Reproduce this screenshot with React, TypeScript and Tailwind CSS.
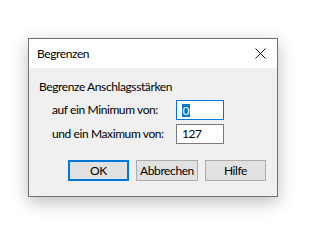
export default function App() {
  return (
    <div className="w-[326px] h-[251px] bg-white pt-[38px] pl-[28px] font-['Lato',sans-serif] text-[12px] tracking-[-0.4px] text-black">
      <div className="w-[250px] h-[159px] border border-[#707070] bg-[#f0f0f0] shadow-[0_5px_16px_rgba(0,0,0,0.26)] flex flex-col">
        {/* title bar */}
        <div className="h-[29px] bg-white flex items-center justify-between pl-[8px] pr-[9px]">
          <span className="leading-none">Begrenzen</span>
          <svg width="11" height="11" viewBox="0 0 11 11" className="mr-[2px]">
            <path d="M0.5 0.5 L10.5 10.5 M10.5 0.5 L0.5 10.5" stroke="#111" strokeWidth="1" />
          </svg>
        </div>

        <div className="flex-1 flex flex-col pl-[10px] pt-[11px]">
          <div className="leading-[16px]">Begrenze Anschlagsstärken</div>

          <div className="mt-[5px] flex flex-col gap-[4px] pl-[13px]">
            <div className="flex items-center h-[20px]">
              <span className="w-[124px] whitespace-nowrap">auf ein Minimum von:</span>
              <div className="w-[48px] h-[20px] border border-[#0078d7] bg-white flex items-center pl-[5px]">
                <span className="bg-[#0078d7] text-white leading-[13px] px-[0.5px]">0</span>
              </div>
            </div>
            <div className="flex items-center h-[20px]">
              <span className="w-[124px] whitespace-nowrap">und ein Maximum von:</span>
              <div className="w-[48px] h-[20px] border border-[#7a7a7a] bg-white flex items-center pl-[5px]">
                <span>127</span>
              </div>
            </div>
          </div>

          <div className="mt-[16px] flex gap-[7px] pl-[29px]">
            <button className="w-[61px] h-[21px] border-2 border-[#0078d7] bg-[#e1e1e1] leading-none">OK</button>
            <button className="w-[62px] h-[21px] border border-[#adadad] bg-[#e1e1e1] leading-none">Abbrechen</button>
            <button className="w-[61px] h-[21px] border border-[#adadad] bg-[#e1e1e1] leading-none">Hilfe</button>
          </div>
        </div>
      </div>
    </div>
  );
}
